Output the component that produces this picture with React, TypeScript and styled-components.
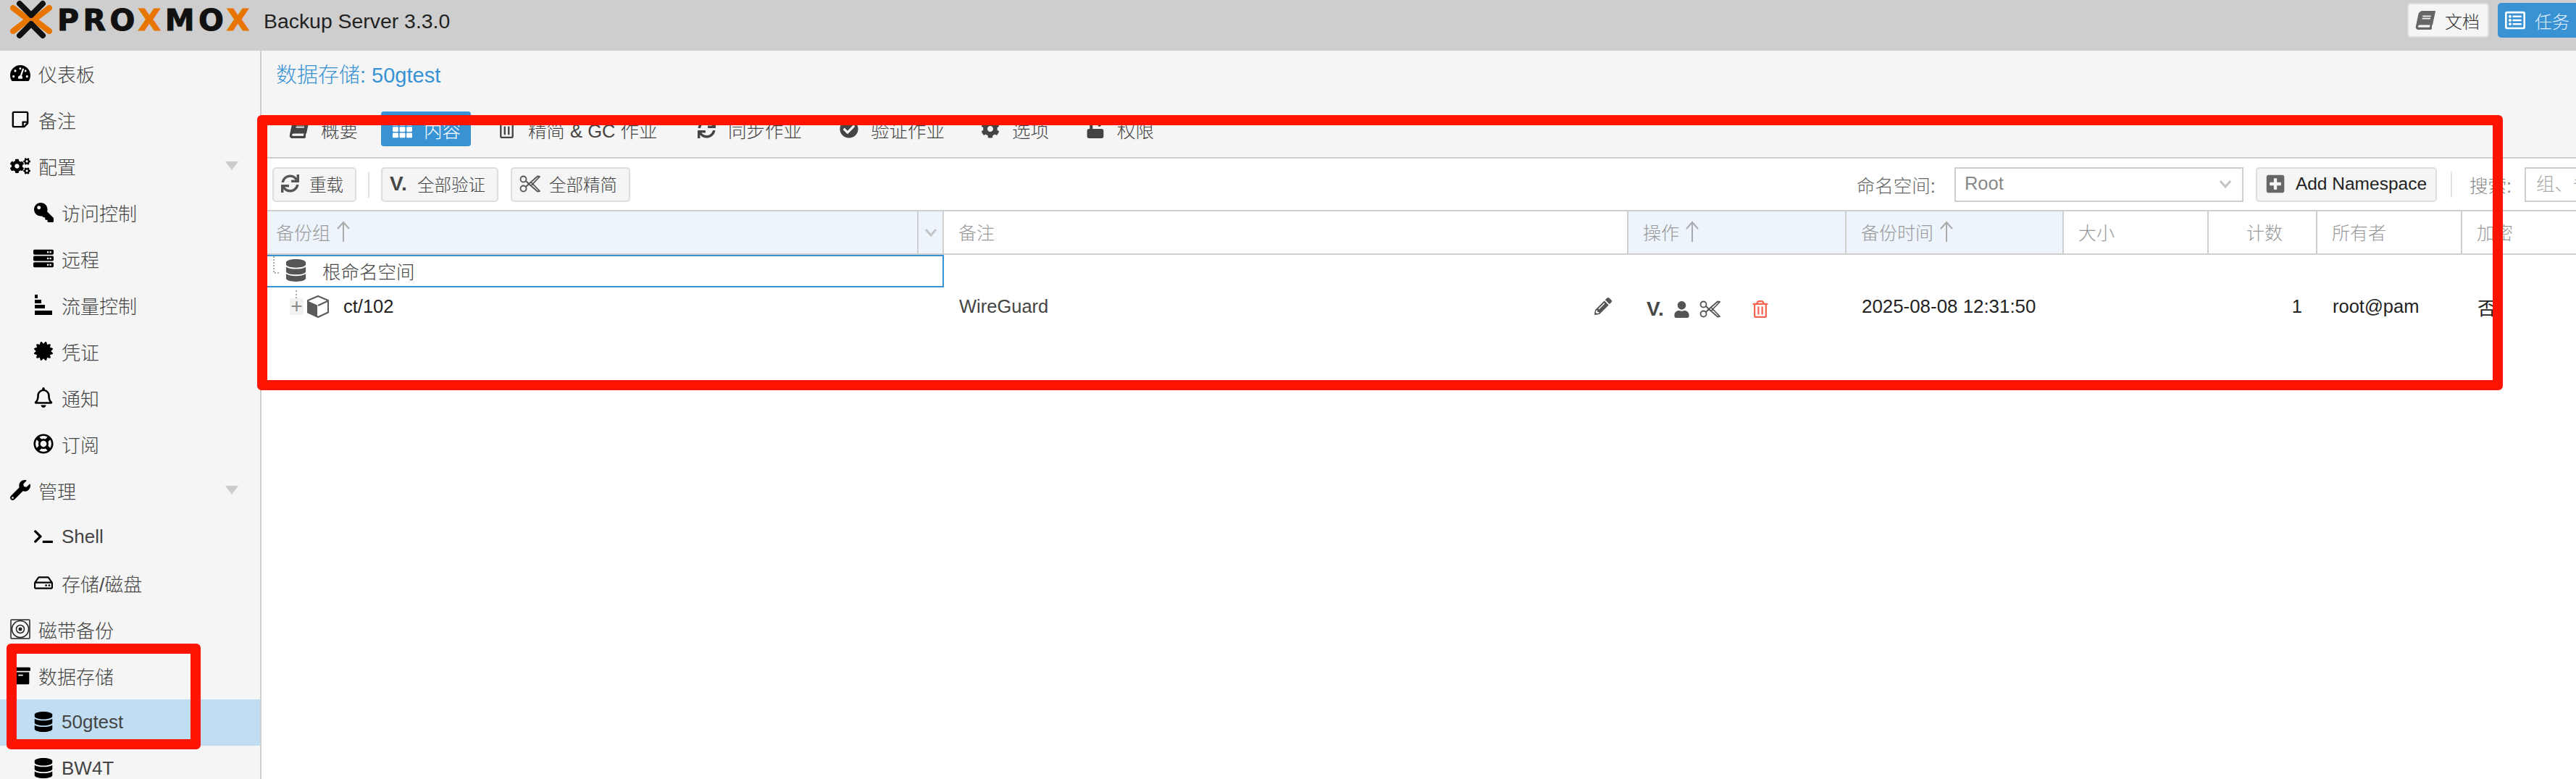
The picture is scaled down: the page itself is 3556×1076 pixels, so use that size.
import * as React from 'react';
import styled, { createGlobalStyle } from 'styled-components';
import {
  FaArchive,
  FaBook,
  FaCertificate,
  FaCheckCircle,
  FaCog,
  FaCogs,
  FaDatabase,
  FaKey,
  FaPencilAlt,
  FaPlusSquare,
  FaRegBell,
  FaRegHdd,
  FaRegLifeRing,
  FaRegListAlt,
  FaRegStickyNote,
  FaRegTrashAlt,
  FaServer,
  FaSync,
  FaTachometerAlt,
  FaTerminal,
  FaTh,
  FaUnlock,
  FaUser,
  FaWrench
} from 'react-icons/fa';

const FONT = '"Liberation Sans", "Noto Sans CJK SC", sans-serif';
const COLUMNS = '942px 945px 301px 300px 200px 150px 200px 1fr';
const BLUE = '#3892d4';
const LINE = '#cfcfcf';

const GlobalStyle = createGlobalStyle`
  html, body {
    margin: 0;
    padding: 0;
    background: #fff;
  }
  body {
    font-family: ${FONT};
    font-weight: 300;
    overflow: hidden;
  }
  * {
    box-sizing: border-box;
  }
`;

// these are used by the data arrays below, so they have to come first
const FlippedKey = styled(FaKey)`
  transform: scaleX(-1);
`;

const SlantedBook = styled(FaBook)`
  transform: skewX(-12deg);
`;

const DeleteIcon = styled(FaRegTrashAlt)`
  margin-left: 30px;
  color: #f76552;
`;

const TrafficIcon = () => (
  <svg width="26" height="28" viewBox="0 0 26 28" fill="#000">
    <rect x="1" y="0" width="4" height="5" />
    <rect x="1" y="7" width="9" height="5" />
    <rect x="1" y="14" width="14" height="5" />
    <rect x="1" y="22" width="24" height="6" />
  </svg>
);

const TapeIcon = () => (
  <svg width="28" height="28" viewBox="0 0 28 28" fill="none" stroke="#222">
    <rect x="1" y="1" width="26" height="26" rx="1" strokeWidth="1.5" />
    <circle cx="14" cy="14" r="11.5" strokeWidth="1.5" />
    <circle cx="14" cy="14" r="5.5" strokeWidth="1.5" />
    <circle cx="14" cy="14" r="2.5" fill="#222" stroke="none" />
  </svg>
);

const Logo = () => (
  <svg width="60" height="54" viewBox="0 0 60 54" fill="none" strokeLinecap="round" strokeLinejoin="round">
    <path d="M5 11 L26 27 L5 43" stroke="#e87500" strokeWidth="8" />
    <path d="M55 11 L34 27 L55 43" stroke="#e87500" strokeWidth="8" />
    <path d="M14 5 L30 21 L46 5" stroke="#111" strokeWidth="8" />
    <path d="M14 49 L30 33 L46 49" stroke="#111" strokeWidth="8" />
  </svg>
);

const SortArrow = () => (
  <svg width="20" height="30" viewBox="0 0 20 30" fill="none" stroke="#aaa" strokeWidth="2">
    <path d="M10 29 V2 M2 11 L10 2 L18 11" />
  </svg>
);

const Chevron = () => (
  <svg width="18" height="12" viewBox="0 0 18 12" fill="none" stroke="#c4c4c4" strokeWidth="3">
    <path d="M2 2 L9 10 L16 2" />
  </svg>
);

const TreeElbow = () => (
  <svg width="10" height="24" viewBox="0 0 10 24" fill="none" stroke="#aaa" strokeWidth="2" strokeDasharray="2 2">
    <path d="M1 0 V23 H10" />
  </svg>
);

// fa-scissors from the old icon font: two rings, two outlined blades
const ScissorsIcon = () => (
  <svg width="29" height="24" viewBox="0 0 29 24" fill="none" stroke="#555" strokeWidth="1.8">
    <circle cx="5.5" cy="5.5" r="4" />
    <circle cx="5.5" cy="18.5" r="4" />
    <path d="M9 8 L13 12 L9 16 M13 12 L25 1.5 L28 2 L16 14.5 M16 9.5 L28 22 L25 22.5 L13 12" strokeLinejoin="round" />
  </svg>
);

const CubeIcon = () => (
  <svg width="30" height="31" viewBox="0 0 30 31">
    <path d="M15 1 L29 7 V23.5 L15 30 L1 23.5 V7 Z" fill="#fff" stroke="#5a5a5a" strokeWidth="2" strokeLinejoin="round" />
    <path d="M1.5 8 L14 13.5 V29 L1.5 23 Z" fill="#5a5a5a" />
    <path d="M15 14 L28 8" stroke="#5a5a5a" strokeWidth="2" />
  </svg>
);

const navItems = [
  { label: '仪表板', icon: <FaTachometerAlt size={28} /> },
  { label: '备注', icon: <FaRegStickyNote size={26} /> },
  { label: '配置', icon: <FaCogs size={31} />, group: true },
  { label: '访问控制', icon: <FlippedKey size={27} />, sub: true },
  { label: '远程', icon: <FaServer size={28} />, sub: true },
  { label: '流量控制', icon: <TrafficIcon />, sub: true },
  { label: '凭证', icon: <FaCertificate size={26} />, sub: true },
  { label: '通知', icon: <FaRegBell size={28} />, sub: true },
  { label: '订阅', icon: <FaRegLifeRing size={28} />, sub: true },
  { label: '管理', icon: <FaWrench size={28} />, group: true },
  { label: 'Shell', icon: <FaTerminal size={26} />, sub: true },
  { label: '存储/磁盘', icon: <FaRegHdd size={26} />, sub: true },
  { label: '磁带备份', icon: <TapeIcon /> },
  { label: '数据存储', icon: <FaArchive size={27} /> },
  { label: '50gtest', icon: <FaDatabase size={28} />, sub: true, active: true },
  { label: 'BW4T', icon: <FaDatabase size={28} />, sub: true }
];

const tabs = [
  { label: '概要', icon: <SlantedBook size={26} />, width: 122 },
  { label: '内容', icon: <FaTh size={27} />, width: 124, active: true },
  { label: '精简 & GC 作业', icon: <FaRegTrashAlt size={25} />, width: 256 },
  { label: '同步作业', icon: <FaSync size={25} />, width: 177 },
  { label: '验证作业', icon: <FaCheckCircle size={26} />, width: 175 },
  { label: '选项', icon: <FaCog size={26} />, width: 125 },
  { label: '权限', icon: <FaUnlock size={26} />, width: 125 }
];

const columns = [
  { label: '备注' },
  { label: '操作', sorted: true, sortable: true },
  { label: '备份时间', sorted: true, sortable: true },
  { label: '大小' },
  { label: '计数', right: true },
  { label: '所有者' },
  { label: '加密' }
];

const App: React.FunctionComponent = () => {
  return (
    <Page>
      <GlobalStyle />
      <Header>
        <Logo />
        <Wordmark>
          PRO<em>X</em>MO<em>X</em>
        </Wordmark>
        <Version>Backup Server 3.3.0</Version>
        <DocButton>
          <SlantedBook size={26} color="#666" />
          文档
        </DocButton>
        <TaskButton>
          <FaRegListAlt size={28} color="#fff" />
          任务
        </TaskButton>
      </Header>

      <Body>
        <Sidebar>
          {navItems.map(item => (
            <NavRow key={item.label} $sub={item.sub} $active={item.active}>
              <NavIcon>{item.icon}</NavIcon>
              {item.label}
              {item.group && <Caret />}
            </NavRow>
          ))}
        </Sidebar>

        <Main>
          <TitleBar>数据存储: 50gtest</TitleBar>
          <TabBar>
            {tabs.map(tab => (
              <Tab key={tab.label} $width={tab.width} $active={tab.active}>
                <TabIcon>{tab.icon}</TabIcon>
                {tab.label}
              </Tab>
            ))}
          </TabBar>

          <Toolbar>
            <ToolButton>
              <FaSync size={25} color="#555" />
              重载
            </ToolButton>
            <ToolSeparator />
            <ToolButton>
              <VerifyMark>V.</VerifyMark>
              全部验证
            </ToolButton>
            <PruneButton>
              <ScissorsIcon />
              全部精简
            </PruneButton>
            <Spacer />
            <FieldLabel>命名空间:</FieldLabel>
            <ComboBox>
              Root
              <Chevron />
            </ComboBox>
            <AddButton>
              <FaPlusSquare size={28} color="#666" />
              Add Namespace
            </AddButton>
            <ToolSeparator />
            <SearchLabel>搜索:</SearchLabel>
            <SearchField>组、备注或所有者</SearchField>
          </Toolbar>

          <HeaderRow>
            <HeadCell $sorted>
              备份组
              <SortArrow />
              <MenuTrigger>
                <Chevron />
              </MenuTrigger>
            </HeadCell>
            {columns.map(col => (
              <HeadCell key={col.label} $sorted={col.sorted} $right={col.right}>
                {col.label}
                {col.sortable && <SortArrow />}
              </HeadCell>
            ))}
          </HeaderRow>

          <NamespaceRow>
            <NamespaceCell>
              <TreeElbow />
              <FaDatabase size={31} color="#555" />
              根命名空间
            </NamespaceCell>
          </NamespaceRow>

          <GroupRow>
            <GroupCell>
              <Expander>+</Expander>
              <CubeIcon />
              <GroupName>ct/102</GroupName>
            </GroupCell>
            <CommentCell>
              WireGuard
              <FaPencilAlt size={24} color="#555" />
            </CommentCell>
            <ActionsCell>
              <VerifyMark>V.</VerifyMark>
              <FaUser size={23} color="#555" />
              <ScissorsIcon />
              <DeleteIcon size={24} />
            </ActionsCell>
            <TimeCell>2025-08-08 12:31:50</TimeCell>
            <DataCell />
            <DataCell $right>1</DataCell>
            <DataCell>root@pam</DataCell>
            <DataCell>否</DataCell>
          </GroupRow>
        </Main>
      </Body>

      <Annotation $left={355} $top={159} $width={3100} $height={380} />
      <Annotation $left={9} $top={889} $width={268} $height={146} />
    </Page>
  );
};

const Page = styled('div')`
  position: relative;
  width: 3556px;
  height: 1076px;
  overflow: hidden;
  color: #333;
`;

const Header = styled('header')`
  display: flex;
  align-items: flex-start;
  height: 70px;
  padding-left: 13px;
  background: #cecece;
  > svg {
    flex-shrink: 0;
  }
`;

const Wordmark = styled('div')`
  width: 276px;
  margin: 5px 0 0 6px;
  font-family: 'DejaVu Sans', sans-serif;
  font-size: 41px;
  line-height: 46px;
  font-weight: 700;
  letter-spacing: 5.5px;
  -webkit-text-stroke: 1px currentColor;
  color: #111;
  white-space: nowrap;
  > em {
    font-style: normal;
    color: #e87500;
  }
`;

const Version = styled('div')`
  margin: 12px 0 0 9px;
  font-size: 28.4px;
  line-height: 34px;
  font-weight: 400;
  color: #222;
  white-space: nowrap;
`;

const DocButton = styled('div')`
  display: flex;
  align-items: center;
  gap: 14px;
  width: 113px;
  height: 48px;
  margin: 4px 0 0 auto;
  padding-left: 10px;
  font-size: 24px;
  color: #333;
  background: #f5f5f5;
  border: 2px solid #dedede;
  border-radius: 5px;
`;

const TaskButton = styled('div')`
  display: flex;
  align-items: center;
  gap: 13px;
  width: 108px;
  height: 48px;
  margin: 4px 0 0 12px;
  padding-left: 10px;
  font-size: 24px;
  color: #e4f0fa;
  background: ${BLUE};
  border-radius: 5px 0 0 5px;
`;

const Body = styled('div')`
  display: flex;
  height: 1006px;
`;

const Sidebar = styled('nav')`
  width: 361px;
  flex-shrink: 0;
  overflow: hidden;
  background: #f5f5f5;
  border-right: 2px solid ${LINE};
`;

const NavRow = styled('div')<{ $sub?: boolean; $active?: boolean }>`
  display: flex;
  align-items: center;
  height: 64px;
  padding: 0 0 2px ${props => (props.$sub ? 46 : 14)}px;
  font-size: 26px;
  color: #444;
  background: ${props => (props.$active ? '#c0ddf2' : 'transparent')};
`;

const NavIcon = styled('span')`
  display: flex;
  justify-content: center;
  width: 28px;
  margin-right: 11px;
  color: #000;
`;

const Caret = styled('span')`
  width: 0;
  height: 0;
  margin: 0 30px 0 auto;
  border-top: 12px solid #ccc;
  border-left: 9px solid transparent;
  border-right: 9px solid transparent;
`;

const Main = styled('main')`
  flex: 1;
  min-width: 0;
  overflow: hidden;
  background: #fff;
`;

const TitleBar = styled('div')`
  height: 84px;
  padding: 17px 0 0 20px;
  font-size: 29px;
  line-height: 34px;
  color: ${BLUE};
  background: #f5f5f5;
`;

const TabBar = styled('div')`
  display: flex;
  gap: 20px;
  height: 65px;
  padding-left: 23px;
  background: #f5f5f5;
  border-bottom: 2px solid ${LINE};
`;

const Tab = styled('div')<{ $width: number; $active?: boolean }>`
  display: flex;
  align-items: center;
  gap: 16px;
  width: ${props => props.$width}px;
  height: 48px;
  padding-left: 15px;
  font-size: 25.5px;
  white-space: nowrap;
  color: ${props => (props.$active ? '#fff' : '#444')};
  background: ${props => (props.$active ? BLUE : 'transparent')};
  border-radius: 4px;
`;

const TabIcon = styled('span')`
  display: flex;
  justify-content: center;
  width: 28px;
  color: inherit;
`;

const Toolbar = styled('div')`
  display: flex;
  align-items: center;
  gap: 16px;
  height: 73px;
  padding-left: 15px;
  border-bottom: 2px solid ${LINE};
`;

const ToolButton = styled('div')`
  display: flex;
  align-items: center;
  gap: 14px;
  height: 48px;
  padding: 0 16px 2px 10px;
  font-size: 23.5px;
  color: #444;
  white-space: nowrap;
  background: #f5f5f5;
  border: 2px solid #ddd;
  border-radius: 5px;
`;

const PruneButton = styled(ToolButton)`
  margin-left: 1px;
  gap: 12px;
`;

const VerifyMark = styled('span')`
  font-size: 28px;
  font-weight: 700;
  color: #474747;
`;

const ToolSeparator = styled('span')`
  width: 2px;
  height: 36px;
  background: #e3e3e3;
`;

const Spacer = styled('span')`
  flex: 1;
`;

const FieldLabel = styled('span')`
  margin-right: 10px;
  font-size: 25.5px;
  color: #666;
  white-space: nowrap;
`;

const ComboBox = styled('div')`
  display: flex;
  align-items: center;
  justify-content: space-between;
  width: 399px;
  height: 48px;
  margin-right: 1px;
  padding: 0 14px 2px 12px;
  font-size: 25.5px;
  color: #888;
  border: 2px solid ${LINE};
`;

const AddButton = styled(ToolButton)`
  width: 250px;
  margin-right: 3px;
  padding: 0 0 2px 11px;
  font-size: 24.5px;
  color: #222;
`;

const SearchLabel = styled(FieldLabel)`
  margin: 0 2px 0 8px;
  color: #888;
`;

const SearchField = styled('div')`
  width: 71px;
  height: 48px;
  padding-left: 14px;
  overflow: hidden;
  font-size: 25.5px;
  line-height: 42px;
  white-space: nowrap;
  color: #aaa;
  border: 2px solid ${LINE};
  border-right: none;
`;

const HeaderRow = styled('div')`
  display: grid;
  grid-template-columns: ${COLUMNS};
  height: 60px;
  border-bottom: 2px solid ${LINE};
`;

const HeadCell = styled('div')<{ $sorted?: boolean; $right?: boolean }>`
  display: flex;
  align-items: center;
  justify-content: ${props => (props.$right ? 'flex-end' : 'flex-start')};
  gap: 8px;
  padding: ${props => (props.$right ? '0 46px 2px 0' : '0 0 2px 20px')};
  font-size: 25px;
  color: #999;
  background: ${props => (props.$sorted ? '#edf4fb' : 'transparent')};
  border-right: 2px solid ${LINE};
  &:last-child {
    border-right: none;
  }
`;

const MenuTrigger = styled('div')`
  display: flex;
  align-items: center;
  justify-content: center;
  width: 35px;
  height: calc(100% + 2px);
  margin: 0 0 -2px auto;
  border-left: 2px solid ${LINE};
`;

const NamespaceRow = styled('div')`
  display: grid;
  grid-template-columns: ${COLUMNS};
  height: 45px;
`;

const NamespaceCell = styled('div')`
  display: flex;
  align-items: center;
  padding: 0 0 2px 16px;
  font-size: 25.5px;
  color: #444;
  border: 2px solid ${BLUE};
  border-left: none;
  > svg:first-child {
    align-self: flex-start;
    margin-right: 6px;
  }
  > svg:nth-child(2) {
    margin-right: 21px;
  }
`;

const GroupRow = styled('div')`
  display: grid;
  grid-template-columns: ${COLUMNS};
  height: 52px;
`;

const DataCell = styled('div')<{ $right?: boolean }>`
  display: flex;
  align-items: center;
  justify-content: ${props => (props.$right ? 'flex-end' : 'flex-start')};
  padding: ${props => (props.$right ? '0 21px 0 0' : '0 0 0 21px')};
  font-size: 25.5px;
  font-weight: 400;
  color: #222;
  white-space: nowrap;
`;

const GroupCell = styled(DataCell)`
  padding-left: 39px;
`;

const TimeCell = styled(DataCell)`
  font-size: 25.9px;
`;

const Expander = styled('span')`
  position: relative;
  display: flex;
  align-items: center;
  justify-content: center;
  width: 19px;
  height: 23px;
  margin-right: 5px;
  font-size: 28px;
  color: #888;
  background: #f2f2f2;
  &::before {
    content: '';
    position: absolute;
    left: 8px;
    top: -11px;
    height: 11px;
    border-left: 2px dotted #aaa;
  }
`;

const GroupName = styled('span')`
  margin-left: 20px;
`;

const CommentCell = styled(DataCell)`
  justify-content: space-between;
  padding-right: 23px;
  color: #444;
`;

const ActionsCell = styled(DataCell)`
  gap: 13px;
  padding: 8px 0 0 25px;
`;

const Annotation = styled('div')<{ $left: number; $top: number; $width: number; $height: number }>`
  position: absolute;
  left: ${props => props.$left}px;
  top: ${props => props.$top}px;
  width: ${props => props.$width}px;
  height: ${props => props.$height}px;
  border: 14px solid #fe1401;
  border-radius: 6px;
`;

export default App;
